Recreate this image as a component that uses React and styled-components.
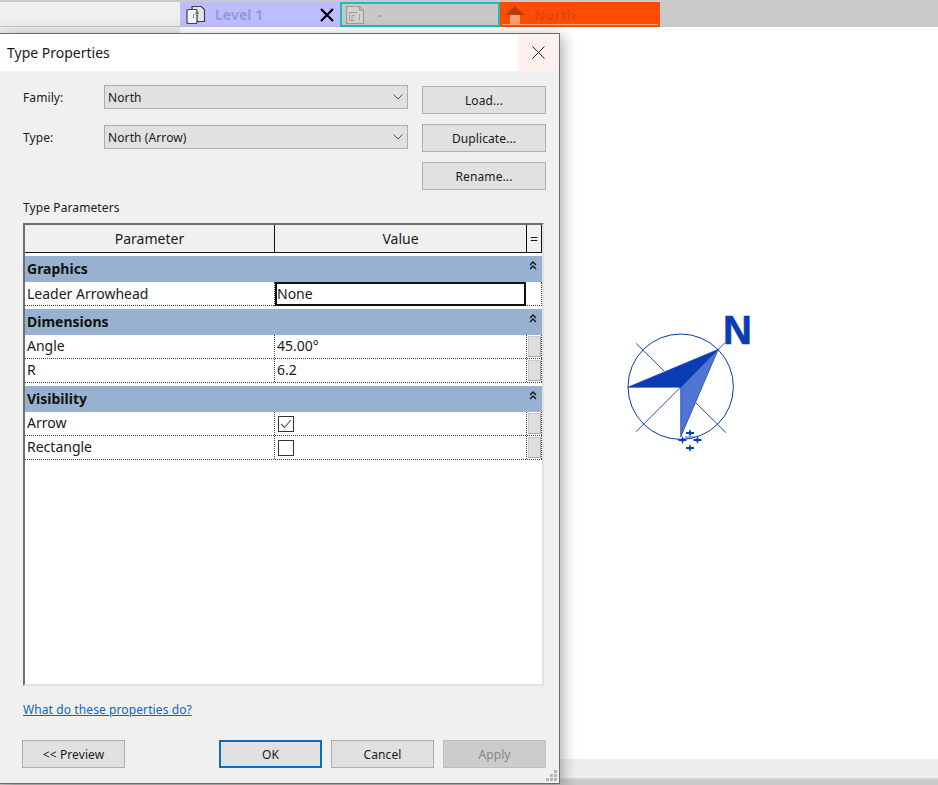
import React from "react";
import styled, { createGlobalStyle, css } from "styled-components";

const GlobalStyle = createGlobalStyle`
  html, body {
    margin: 0;
    padding: 0;
    background: #fff;
  }
  * {
    box-sizing: border-box;
  }
`;

const Page = styled.div`
  position: relative;
  display: flex;
  flex-direction: column;
  width: 938px;
  height: 785px;
  overflow: hidden;
  background: #fff;
  font-family: "Noto Sans", "Open Sans", sans-serif;
  color: #1a1a1a;
`;

const TabBar = styled.div`
  display: flex;
  flex: none;
  height: 27px;
  padding-top: 2px;
  background: #c9c9c9;
`;

const SidePanel = styled.div`
  position: relative;
  z-index: 1;
  flex: none;
  width: 180px;
  height: 31px;
  margin-right: 1px;
  background: linear-gradient(#f1f1f1 0, #ececec 24px, #c8c8c8 24px, #c8c8c8 25px, #ececec 25px);
`;

const TAB_COLORS = {
  level: { bg: "#bcbcff", text: "#9898dc" },
  plan: { bg: "#c8c8c8", text: "#a6a6a6" },
  north: { bg: "#ff4c00", text: "#e24700" },
};

const Tab = styled.div`
  position: relative;
  display: flex;
  align-items: center;
  flex: none;
  width: ${(p) => p.$width}px;
  height: 25px;
  padding-left: 5px;
  gap: 9px;
  background: ${(p) => TAB_COLORS[p.$kind].bg};
  color: ${(p) => TAB_COLORS[p.$kind].text};
  font-size: 14px;
  font-weight: 700;
  ${(p) =>
    p.$kind === "plan" &&
    css`
      border: 2px solid #1fbcbc;
      padding-left: 3px;
    `}
  ${(p) =>
    p.$kind === "north" &&
    css`
      &::after {
        content: "";
        position: absolute;
        left: 2px;
        right: 2px;
        bottom: 2px;
        height: 1px;
        background: #ffa878;
      }
    `}
`;

const TabLabel = styled.span`
  flex: 1;
  margin-left: ${(p) => p.$indent || 0}px;
`;

const TabClose = styled.svg`
  flex: none;
  width: 14px;
  height: 14px;
  margin-right: 6px;
`;

const Canvas = styled.div`
  position: relative;
  flex: 1;
  background: #fff;
`;

const BottomBar = styled.div`
  flex: none;
  height: 26px;
  background: #eeeeee;
  border-bottom: 5px solid #c9c9c9;
  box-shadow: inset 0 -2px 0 #d4d4d4;
`;

const NorthSymbol = styled.svg`
  position: absolute;
  left: 600px;
  top: 273px;
  width: 170px;
  height: 170px;
`;

const Dialog = styled.div`
  position: absolute;
  z-index: 2;
  left: 0;
  top: 33px;
  display: flex;
  flex-direction: column;
  width: 560px;
  height: 751px;
  background: #f0f0f0;
  border: 1px solid #6a6a6a;
  border-left: none;
  box-shadow: 3px 3px 14px rgba(0, 0, 0, 0.32);
  letter-spacing: 0.1px;
`;

const TitleBar = styled.div`
  display: flex;
  align-items: center;
  flex: none;
  height: 37px;
  padding-left: 7px;
  background: #fff;
`;

const Title = styled.span`
  flex: 1;
  font-size: 14px;
  letter-spacing: 0;
`;

const CloseButton = styled.div`
  display: flex;
  align-items: center;
  justify-content: center;
  width: 41px;
  height: 37px;
  background: #fdf0ee;
`;

const Body = styled.div`
  display: flex;
  flex-direction: column;
  flex: 1;
  padding: 14px 0 0 23px;
`;

const TopSection = styled.div`
  display: flex;
`;

const Fields = styled.div`
  display: flex;
  flex-direction: column;
  gap: 16px;
`;

const FieldRow = styled.div`
  display: flex;
  align-items: center;
  height: 24px;
`;

const FieldLabel = styled.label`
  width: 81px;
  font-size: 12px;
`;

const Combo = styled.div`
  display: flex;
  align-items: center;
  justify-content: space-between;
  width: 304px;
  height: 24px;
  padding: 0 4px 0 3px;
  background: #e1e1e1;
  border: 1px solid #adadad;
  font-size: 12px;
`;

const ButtonColumn = styled.div`
  display: flex;
  flex-direction: column;
  gap: 10px;
  width: 124px;
  margin: 1px 0 0 14px;
`;

const Button = styled.button`
  width: ${(p) => p.$width || "100%"};
  height: 28px;
  padding: 0;
  background: ${(p) => (p.$disabled ? "#cccccc" : "#e1e1e1")};
  border: ${(p) => (p.$primary ? "2px solid #0f6cbd" : `1px solid ${p.$disabled ? "#bfbfbf" : "#adadad"}`)};
  color: ${(p) => (p.$disabled ? "#858585" : "#1a1a1a")};
  font-family: inherit;
  font-size: 12px;
  letter-spacing: 0.1px;
`;

const SectionLabel = styled.div`
  height: 16px;
  margin: 10px 0 7px;
  font-size: 12px;
  line-height: 16px;
`;

const Table = styled.div`
  flex: none;
  width: 521px;
  height: 463px;
  background: #fff;
  border-style: solid;
  border-color: #707070 #e2e2e2 #e2e2e2 #707070;
  border-width: 2px;
  letter-spacing: 0;
`;

const COLUMNS = "250px 252px 15px";

const HeaderRow = styled.div`
  display: grid;
  grid-template-columns: ${COLUMNS};
  height: 28px;
  margin-bottom: 3px;
  background: #f0f0f0;
  border-bottom: 1px solid #111;
`;

const HeaderCell = styled.div`
  display: flex;
  align-items: center;
  justify-content: center;
  font-size: 14px;
  border-right: 1px solid #111;
`;

const Group = styled.div`
  margin-bottom: 3px;
`;

const GroupHeader = styled.div`
  display: flex;
  align-items: center;
  justify-content: space-between;
  width: 517px;
  height: 26px;
  padding: 0 5px 2px 2px;
  background: #97b2d0;
  font-size: 14px;
  font-weight: 700;
  color: #111;
`;

const GroupToggle = styled.svg`
  width: 8px;
  height: 9px;
  margin-top: -5px;
`;

const Row = styled.div`
  display: grid;
  grid-template-columns: ${COLUMNS};
  width: 517px;
  height: 24px;
  border-bottom: 1px dotted #444;
`;

const Cell = styled.div`
  display: flex;
  align-items: center;
  padding: 0 0 2px 2px;
  font-size: 14px;
  border-right: 1px dotted #444;
`;

const SelectedCell = styled(Cell)`
  border: 2px solid #111;
  padding: 0 0 1px 0;
  margin-right: 1px;
`;

const CheckCell = styled(Cell)`
  padding-bottom: 0;
`;

const StepperCell = styled.div`
  display: flex;
  align-items: center;
  justify-content: center;
  border-right: 1px dotted #444;
`;

const Stepper = styled.div`
  width: 13px;
  height: 21px;
  background: #dedede;
  border: 1px solid #c8c8c8;
  border-right-color: #a8a8a8;
  border-bottom-color: #a8a8a8;
`;

const Check = styled.div`
  display: flex;
  align-items: center;
  justify-content: center;
  width: 16px;
  height: 16px;
  margin-left: 1px;
  background: #fff;
  border: 1px solid #333;
`;

const HelpLink = styled.a`
  height: 16px;
  margin: 16px 0 0;
  color: #0f64c0;
  font-size: 12px;
  line-height: 16px;
  text-decoration: underline;
`;

const Footer = styled.div`
  display: flex;
  gap: 9px;
  width: 524px;
  margin: 22px 0 0 -1px;
`;

const Spacer = styled.div`
  flex: 1;
`;

const Grip = styled.svg`
  position: absolute;
  right: 1px;
  bottom: 1px;
  width: 12px;
  height: 12px;
`;

const LevelIcon = () => (
  <svg width="20" height="20" viewBox="0 0 20 20" fill="none">
    <path d="M6 1.5h9l3.5 3v12h-12z" fill="#e4e4e4" stroke="#3e3e50" strokeWidth="1.2" />
    <rect x="1" y="4.5" width="10" height="14" rx="1" fill="#f4f4f4" stroke="#3e3e50" strokeWidth="1.2" />
    <path d="M9 8h4M11 10v3M7.5 9v4" stroke="#50506a" strokeDasharray="1.5 1" />
  </svg>
);

const PlanIcon = () => (
  <svg width="20" height="20" viewBox="0 0 20 20" fill="none">
    <path d="M1.5 1.5h13l4 4v13h-17z" fill="#d2d2d2" stroke="#9c9c9c" strokeWidth="1.2" />
    <path d="M4.5 15.5v-8h8M7 15.5v-5h3M14.5 9v6.5M4.5 15.5h5" stroke="#a0a0a0" />
    <path d="M14.5 1.5v4h4" stroke="#a0a0a0" />
  </svg>
);

const HouseIcon = () => (
  <svg width="20" height="20" viewBox="0 0 20 20">
    <rect x="5" y="9" width="10" height="10" fill="#f7a070" />
    <path d="M10 1 20 10H0z" fill="#b83e10" />
  </svg>
);

const ToggleGlyph = () => (
  <GroupToggle viewBox="0 0 8 9" fill="none" stroke="#111" strokeWidth="1.3">
    <path d="M1 4 4 1l3 3M1 8l3-3 3 3" />
  </GroupToggle>
);

const Chevron = () => (
  <svg width="10" height="6" viewBox="0 0 10 6" fill="none" stroke="#555">
    <path d="M.5.5 5 5 9.5.5" />
  </svg>
);

const groups = [
  {
    name: "Graphics",
    rows: [{ label: "Leader Arrowhead", value: "None", selected: true }],
  },
  {
    name: "Dimensions",
    rows: [
      { label: "Angle", value: "45.00°" },
      { label: "R", value: "6.2" },
    ],
  },
  {
    name: "Visibility",
    rows: [
      { label: "Arrow", checked: true, isCheck: true },
      { label: "Rectangle", checked: false, isCheck: true },
    ],
  },
];

const ParamRow = ({ row }) => {
  if (row.selected) {
    return (
      <Row>
        <Cell>{row.label}</Cell>
        <SelectedCell>{row.value}</SelectedCell>
        <StepperCell />
      </Row>
    );
  }
  return (
    <Row>
      <Cell>{row.label}</Cell>
      {row.isCheck ? (
        <CheckCell>
          <Check>
            {row.checked && (
              <svg width="12" height="10" viewBox="0 0 12 10" fill="none" stroke="#555" strokeWidth="1.1">
                <path d="M1 5l3.5 3.5L11 1" />
              </svg>
            )}
          </Check>
        </CheckCell>
      ) : (
        <Cell>{row.value}</Cell>
      )}
      <StepperCell>
        <Stepper />
      </StepperCell>
    </Row>
  );
};

// small move handle around the symbol's insertion point
const Handle = ({ x, y }) => (
  <path
    d={`M${x} ${y - 4}l1.2 3h2.8v2h-2.8L${x} ${y + 4}l-1.2-3h-2.8v-2h2.8z`}
    fill="#0a3cb4"
  />
);

export default function App() {
  return (
    <Page>
      <GlobalStyle />
      <TabBar>
        <SidePanel />
        <Tab $kind="level" $width={159}>
          <LevelIcon />
          <TabLabel>Level 1</TabLabel>
          <TabClose viewBox="0 0 14 14" stroke="#000" strokeWidth="2.2">
            <path d="M1 1l12 12M13 1 1 13" />
          </TabClose>
        </Tab>
        <Tab $kind="plan" $width={160}>
          <PlanIcon />
          <TabLabel $indent={3}>-</TabLabel>
        </Tab>
        <Tab $kind="north" $width={160}>
          <HouseIcon />
          <TabLabel>North</TabLabel>
        </Tab>
      </TabBar>

      <Canvas>
        <NorthSymbol viewBox="0 0 170 170" fill="none">
          <circle cx="80.7" cy="86.7" r="52.7" stroke="#0b3a9c" strokeWidth="1" />
          <path d="M36 131.7 125 42.7M36 43.3 64 71M96 103 126 132.7" stroke="#0b3a9c" strokeWidth="0.9" />
          <path d="M27.7 87.3 118.3 49.3 80.7 87.3z" fill="#0a3cb4" stroke="#0a3cb4" strokeWidth="0.6" />
          <path d="M118.3 49.3 80.7 87.3V137z" fill="#4f74d2" stroke="#0a3cb4" strokeWidth="0.7" />
          <text x="123" y="44" fill="#0a3cb4" stroke="#0a3cb4" strokeWidth="0.6" fontFamily="Liberation Sans" fontWeight="700" fontSize="40">N</text>
          <Handle x={90} y={133} />
          <Handle x={97.5} y={140} />
          <Handle x={90} y={148} />
          <Handle x={82.5} y={140} />
          <path d="M85 137h10" stroke="#0a3cb4" strokeWidth="0.8" />
        </NorthSymbol>
      </Canvas>
      <BottomBar />

      <Dialog>
        <TitleBar>
          <Title>Type Properties</Title>
          <CloseButton>
            <svg width="13" height="13" viewBox="0 0 13 13" stroke="#222">
              <path d="M.5.5l12 12M12.5.5l-12 12" />
            </svg>
          </CloseButton>
        </TitleBar>
        <Body>
          <TopSection>
            <Fields>
              <FieldRow>
                <FieldLabel>Family:</FieldLabel>
                <Combo>
                  North
                  <Chevron />
                </Combo>
              </FieldRow>
              <FieldRow>
                <FieldLabel>Type:</FieldLabel>
                <Combo>
                  North (Arrow)
                  <Chevron />
                </Combo>
              </FieldRow>
            </Fields>
            <ButtonColumn>
              <Button>Load...</Button>
              <Button>Duplicate...</Button>
              <Button>Rename...</Button>
            </ButtonColumn>
          </TopSection>

          <SectionLabel>Type Parameters</SectionLabel>
          <Table>
            <HeaderRow>
              <HeaderCell>Parameter</HeaderCell>
              <HeaderCell>Value</HeaderCell>
              <HeaderCell>=</HeaderCell>
            </HeaderRow>
            {groups.map((group) => (
              <Group key={group.name}>
                <GroupHeader>
                  {group.name}
                  <ToggleGlyph />
                </GroupHeader>
                {group.rows.map((row) => (
                  <ParamRow key={row.label} row={row} />
                ))}
              </Group>
            ))}
          </Table>

          <HelpLink>What do these properties do?</HelpLink>

          <Footer>
            <Button $width="103px">&lt;&lt; Preview</Button>
            <Spacer />
            <Button $width="103px" $primary>OK</Button>
            <Button $width="103px">Cancel</Button>
            <Button $width="103px" $disabled>Apply</Button>
          </Footer>
        </Body>
        <Grip viewBox="0 0 12 12" fill="#b4b4b4">
          <rect x="8" y="0" width="3" height="3" />
          <rect x="4" y="4" width="3" height="3" />
          <rect x="8" y="4" width="3" height="3" />
          <rect x="0" y="8" width="3" height="3" />
          <rect x="4" y="8" width="3" height="3" />
          <rect x="8" y="8" width="3" height="3" />
        </Grip>
      </Dialog>
    </Page>
  );
}
